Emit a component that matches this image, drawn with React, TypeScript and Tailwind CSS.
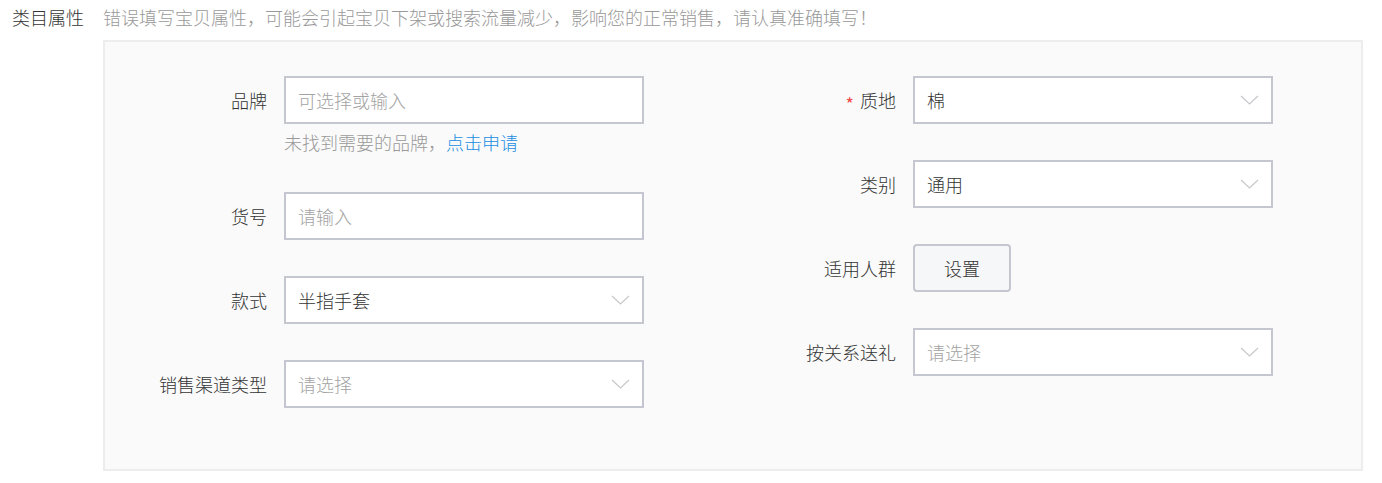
import type { ReactNode } from "react";

const FONT = { fontFamily: '"Noto Sans CJK SC", "Noto Sans", sans-serif' };

function Chevron() {
  return (
    <svg width="19" height="10" viewBox="0 0 19 10" className="shrink-0">
      <polyline
        points="1,1 9.5,9 18,1"
        fill="none"
        stroke="#c8c8cc"
        strokeWidth="1.2"
      />
    </svg>
  );
}

function Field({
  label,
  required,
  children,
  help,
}: {
  label: string;
  required?: boolean;
  children: ReactNode;
  help?: ReactNode;
}) {
  return (
    <div className="flex items-start">
      <div className="flex h-12 w-[162px] shrink-0 items-center justify-end text-[18px] text-[#333]">
        {required && (
          <span className="mr-[6px] mt-[6px] text-[18px] font-normal leading-none text-[#f04a4a]">*</span>
        )}
        {label}
      </div>
      <div className="ml-[17px] flex flex-col">
        {children}
        {help}
      </div>
    </div>
  );
}

function TextBox({ placeholder }: { placeholder: string }) {
  return (
    <div className="flex h-12 w-[360px] items-center border-2 border-[#c5c7d0] bg-white px-3 text-[18px] text-[#a3a3a3]">
      {placeholder}
    </div>
  );
}

function Select({ value, placeholder }: { value?: string; placeholder?: string }) {
  return (
    <div className="flex h-12 w-[360px] items-center justify-between border-2 border-[#c5c7d0] bg-white pl-3 pr-3 text-[18px]">
      {value ? (
        <span className="text-[#333]">{value}</span>
      ) : (
        <span className="text-[#a3a3a3]">{placeholder}</span>
      )}
      <Chevron />
    </div>
  );
}

export default function App() {
  return (
    <div className="min-h-[483px] bg-white pb-3 pr-[19px] font-light" style={FONT}>
      <div className="flex h-[34px] items-center">
        <div className="w-[103px] shrink-0 pl-3 text-[18px] text-[#333]">类目属性</div>
        <div className="text-[18px] text-[#999]">
          错误填写宝贝属性，可能会引起宝贝下架或搜索流量减少，影响您的正常销售，请认真准确填写！
        </div>
      </div>
      <div className="ml-[103px] mt-[6px] border-2 border-[#ededed] bg-[#fafafa] pt-[34px] pb-[61px]">
        <div className="grid grid-cols-2">
          <div className="flex flex-col gap-9">
            <Field
              label="品牌"
              help={
                <div className="pt-2 pb-1 text-[18px] leading-5 text-[#999]">
                  未找到需要的品牌，<span className="text-[#1a8ee1]">点击申请</span>
                </div>
              }
            >
              <TextBox placeholder="可选择或输入" />
            </Field>
            <Field label="货号">
              <TextBox placeholder="请输入" />
            </Field>
            <Field label="款式">
              <Select value="半指手套" />
            </Field>
            <Field label="销售渠道类型">
              <Select placeholder="请选择" />
            </Field>
          </div>
          <div className="flex flex-col gap-9 pl-px">
            <Field label="质地" required>
              <Select value="棉" />
            </Field>
            <Field label="类别">
              <Select value="通用" />
            </Field>
            <Field label="适用人群">
              <button className="h-12 w-[98px] rounded-[4px] border-2 border-[#c5c7d0] bg-[#f6f7f9] text-[18px] text-[#333]">
                设置
              </button>
            </Field>
            <Field label="按关系送礼">
              <Select placeholder="请选择" />
            </Field>
          </div>
        </div>
      </div>
    </div>
  );
}
